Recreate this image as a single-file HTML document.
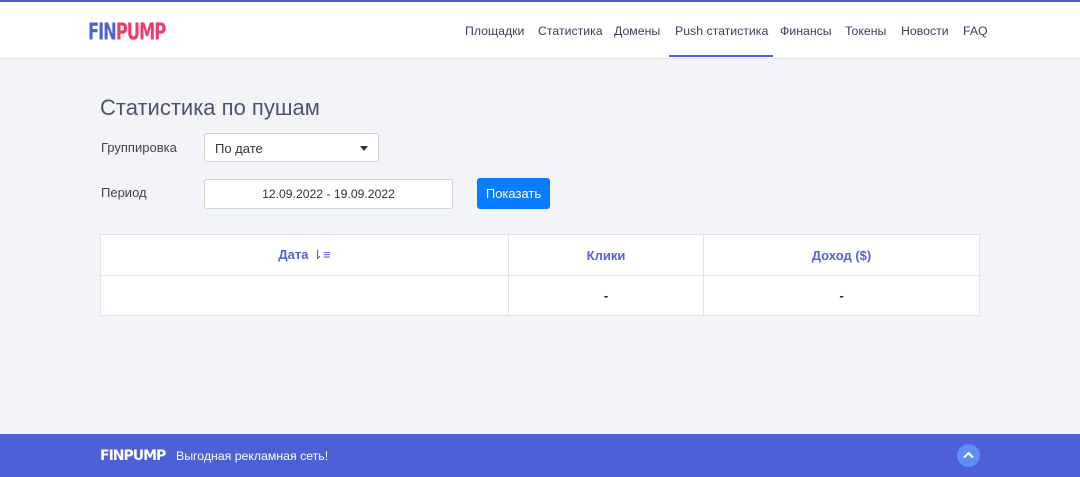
<!DOCTYPE html>
<html><head><meta charset="utf-8"><style>
*{margin:0;padding:0;box-sizing:border-box}
body{width:1080px;height:477px;overflow:hidden;background:#f3f4f8;font-family:"Liberation Sans",sans-serif;position:relative;color:#3b3f55}
.top{position:absolute;left:0;top:0;width:1080px;height:2px;background:#4c5fd5}
.hdr{position:absolute;left:0;top:2px;width:1080px;height:57px;background:#fff;border-bottom:1px solid #e3e5ec}
.logo{position:absolute;left:88px;top:19px;font-weight:900;font-size:19px;letter-spacing:-1.2px;font-family:"DejaVu Sans",sans-serif;transform:scale(0.86,1.2);transform-origin:0 0}
.nav{position:absolute;top:24px;font-size:12.3px;color:#3a3f58;white-space:nowrap}
.ul{position:absolute;left:669px;top:55px;width:104px;height:2px;background:#4c5fd5}
h1{position:absolute;left:100px;top:95px;font-size:22px;font-weight:normal;color:#50526e}
.lbl{position:absolute;left:101px;font-size:13px;color:#444}
.box{position:absolute;background:#fff;border:1px solid #cfd3da;border-radius:3px;font-size:13px;color:#333}
.btn{position:absolute;left:477px;top:178px;width:73px;height:31px;background:#0a7cff;color:#fff;border-radius:3px;font-size:13px;text-align:center;line-height:31px}
table{position:absolute;left:100px;top:234px;width:880px;border-collapse:collapse;background:#fff}
td{border:1px solid #dfe2e8;text-align:center;font-size:13px}
.h td{height:41px;color:#5660d8;font-weight:bold}
.r td{height:40px;font-weight:bold;color:#222}
.ftr{position:absolute;left:0;top:434px;width:1080px;height:43px;background:#4c60d8}
</style></head><body>
<div class="top"></div>
<div class="hdr"></div>
<div class="logo"><span style="color:#4c5fd5">FIN</span><span style="color:#f2386e">PUMP</span></div>
<div class="nav" style="left:465px">Площадки</div>
<div class="nav" style="left:538px">Статистика</div>
<div class="nav" style="left:614px">Домены</div>
<div class="nav" style="left:675px">Push статистика</div>
<div class="nav" style="left:780px">Финансы</div>
<div class="nav" style="left:845px">Токены</div>
<div class="nav" style="left:901px">Новости</div>
<div class="nav" style="left:963px">FAQ</div>
<div class="ul"></div>
<h1>Статистика по пушам</h1>
<div class="lbl" style="top:140px">Группировка</div>
<div class="box" style="left:204px;top:133px;width:175px;height:29px;padding:7px 10px">По дате<span style="position:absolute;right:10px;top:12px;border-left:4px solid transparent;border-right:4px solid transparent;border-top:5px solid #333"></span></div>
<div class="lbl" style="top:185px">Период</div>
<div class="box" style="left:204px;top:179px;width:249px;height:30px;text-align:center;line-height:28px;font-size:12.2px">12.09.2022 - 19.09.2022</div>
<div class="btn">Показать</div>
<table><tr class="h"><td style="width:408px">Дата <span style="font-weight:normal">⇂≡</span></td><td style="width:195px">Клики</td><td>Доход ($)</td></tr>
<tr class="r"><td></td><td>-</td><td>-</td></tr></table>
<div class="ftr">
<div style="position:absolute;left:100px;top:14px;color:#fff;font-weight:900;font-size:14px;letter-spacing:-1px;font-family:'DejaVu Sans',sans-serif">FINPUMP</div>
<div style="position:absolute;left:176px;top:15px;color:#fff;font-size:12.3px">Выгодная рекламная сеть!</div>
<div style="position:absolute;left:957px;top:10px;width:23px;height:23px;border-radius:50%;background:#5b8ff5"><svg width="23" height="23"><path d="M7 13.5L11.5 9L16 13.5" stroke="#fff" stroke-width="2" fill="none"/></svg></div>
</div>
</body></html>
